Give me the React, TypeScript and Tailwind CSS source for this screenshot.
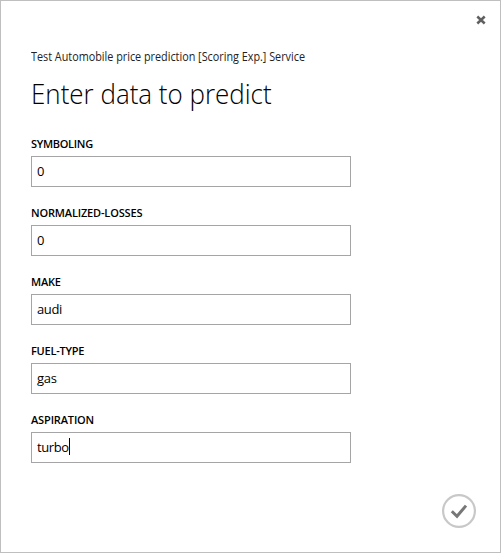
import { useState } from "react";

type Field = { label: string; value: string; tracking: string; valueTracking: string };

const fields: Field[] = [
  { label: "SYMBOLING", value: "0", tracking: "tracking-[-0.3px]", valueTracking: "" },
  { label: "NORMALIZED-LOSSES", value: "0", tracking: "tracking-[-0.16px]", valueTracking: "" },
  { label: "MAKE", value: "audi", tracking: "tracking-[-0.2px]", valueTracking: "tracking-[-0.4px]" },
  { label: "FUEL-TYPE", value: "gas", tracking: "tracking-[-0.25px]", valueTracking: "tracking-[-0.3px]" },
  { label: "ASPIRATION", value: "turbo", tracking: "tracking-[-0.15px]", valueTracking: "tracking-[-0.4px]" },
];

function FieldRow({ field, active }: { field: Field; active: boolean }) {
  return (
    <div className="flex h-[69px] flex-col">
      <div className="h-[19px] text-[11px] leading-[14px] font-semibold">
        <span className={field.tracking}>{field.label}</span>
      </div>
      <div className="flex h-[31px] w-80 items-center border border-[#a5a5a5] pb-[2px] pl-[5px] text-[13px] leading-[18px]">
        <span className={field.valueTracking}>{field.value}</span>
        {active && <span className="h-[17px] w-px bg-black" />}
      </div>
    </div>
  );
}

export default function App() {
  const [active] = useState(fields.length - 1);
  return (
    <div className="flex h-[553px] w-[501px] flex-col border border-[#bfbfbf] bg-white font-['Open_Sans','Noto_Sans',sans-serif] text-black">
      <div className="flex h-[47px] justify-end pt-[14px] pr-[14px]">
        <svg width="10" height="10" viewBox="0 0 10 10" stroke="#606060" strokeWidth="2.5">
          <path d="M1.3 1.5 8.7 8.5M8.7 1.5 1.3 8.5" />
        </svg>
      </div>
      <div className="flex flex-col pl-[30px]">
        <div className="h-[24px] pt-px text-[12px] leading-[16px] whitespace-nowrap text-[#222]">
          <span className="inline-block origin-left scale-x-[0.901]">Test Automobile price prediction [Scoring Exp.] Service</span>
        </div>
        <h1 className="h-[65px] text-[28px] leading-[42px] font-light">
          <span className="inline-block origin-left scale-x-[0.927]">Enter data to predict</span>
        </h1>
        {fields.map((f, i) => (
          <FieldRow key={f.label} field={f} active={i === active} />
        ))}
      </div>
      <div className="mt-auto flex justify-end pr-[24px] pb-[24px]">
        <svg width="34" height="34" viewBox="0 0 34 34" fill="none">
          <circle cx="17" cy="17" r="15.9" stroke="#c8c8c8" strokeWidth="2.2" />
          <path d="M9.8 17.2 15 22.3 24 11.6" stroke="#777" strokeWidth="3" />
        </svg>
      </div>
    </div>
  );
}
